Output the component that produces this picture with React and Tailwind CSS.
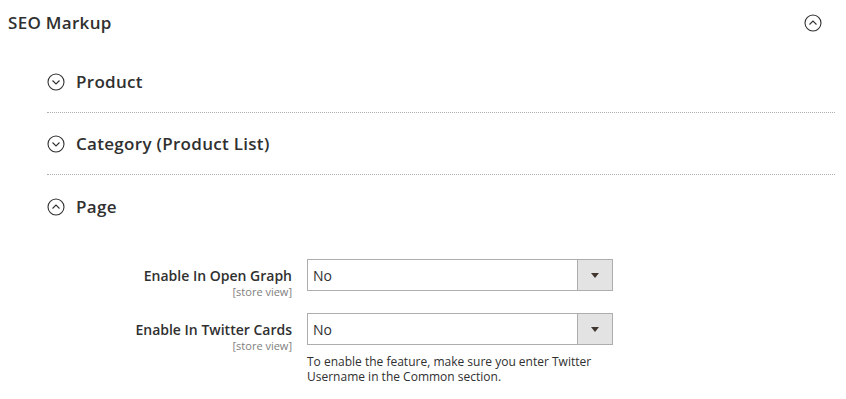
import React from 'react';

const font = { fontFamily: '"Open Sans", "Liberation Sans", sans-serif' };

function CircleChevron({ up }) {
    return (
        <svg width="18" height="18" viewBox="0 0 18 18" className="shrink-0">
            <circle cx="9" cy="9" r="8" fill="none" stroke="#303030" strokeWidth="1.1" />
            {up ? (
                <path d="M5.5 10.5 L9 7 L12.5 10.5" fill="none" stroke="#303030" strokeWidth="1.1" />
            ) : (
                <path d="M5.5 7.5 L9 11 L12.5 7.5" fill="none" stroke="#303030" strokeWidth="1.1" />
            )}
        </svg>
    );
}

function Section({ title, up, last }) {
    return (
        <div className={`flex items-center gap-[11px] h-[62px] pt-[1px] ${last ? '' : 'border-b border-dotted border-[#adadad]'}`}>
            <CircleChevron up={up} />
            <span className="text-[17px] font-semibold tracking-[0.3px] text-[#303030]">{title}</span>
        </div>
    );
}

function SelectField({ label, note }) {
    return (
        <div className="flex">
            <div className="w-[292px] flex flex-col items-end pt-[8px]">
                <span className="text-[14px] font-semibold text-[#303030] leading-[18px]">{label}</span>
                <span className="text-[11px] text-[#808080] leading-[14px]">[store view]</span>
            </div>
            <div className="ml-[15px] w-[306px]">
                <div className="flex h-[32px] border border-[#adadad] bg-white">
                    <div className="flex-1 flex items-center pl-[5px] text-[14px] text-[#303030]">No</div>
                    <div className="w-[35px] bg-[#e3e3e3] border-l border-[#adadad] flex items-center justify-center">
                        <div className="w-0 h-0 border-l-[4px] border-r-[4px] border-t-[5px] border-l-transparent border-r-transparent border-t-[#41362f]" />
                    </div>
                </div>
                {note && (
                    <p className="mt-[9px] text-[12px] leading-[15px] text-[#303030]">{note}</p>
                )}
            </div>
        </div>
    );
}

export default function App() {
    return (
        <div className="w-[846px] h-[399px] bg-white overflow-hidden" style={font}>
            <div className="flex items-center justify-between h-[46px] pl-[8px] pr-[24px]">
                <h2 className="text-[17px] font-semibold tracking-[0.3px] text-[#303030]">SEO Markup</h2>
                <CircleChevron up />
            </div>
            <div className="ml-[47px] mr-[11px] mt-[5px]">
                <Section title="Product" />
                <Section title="Category (Product List)" />
                <Section title="Page" up last />
            </div>
            <div className="mt-[22px] flex flex-col gap-[14px]">
                <SelectField label="Enable In Open Graph" />
                <SelectField
                    label="Enable In Twitter Cards"
                    note="To enable the feature, make sure you enter Twitter Username in the Common section."
                />
            </div>
        </div>
    );
}
